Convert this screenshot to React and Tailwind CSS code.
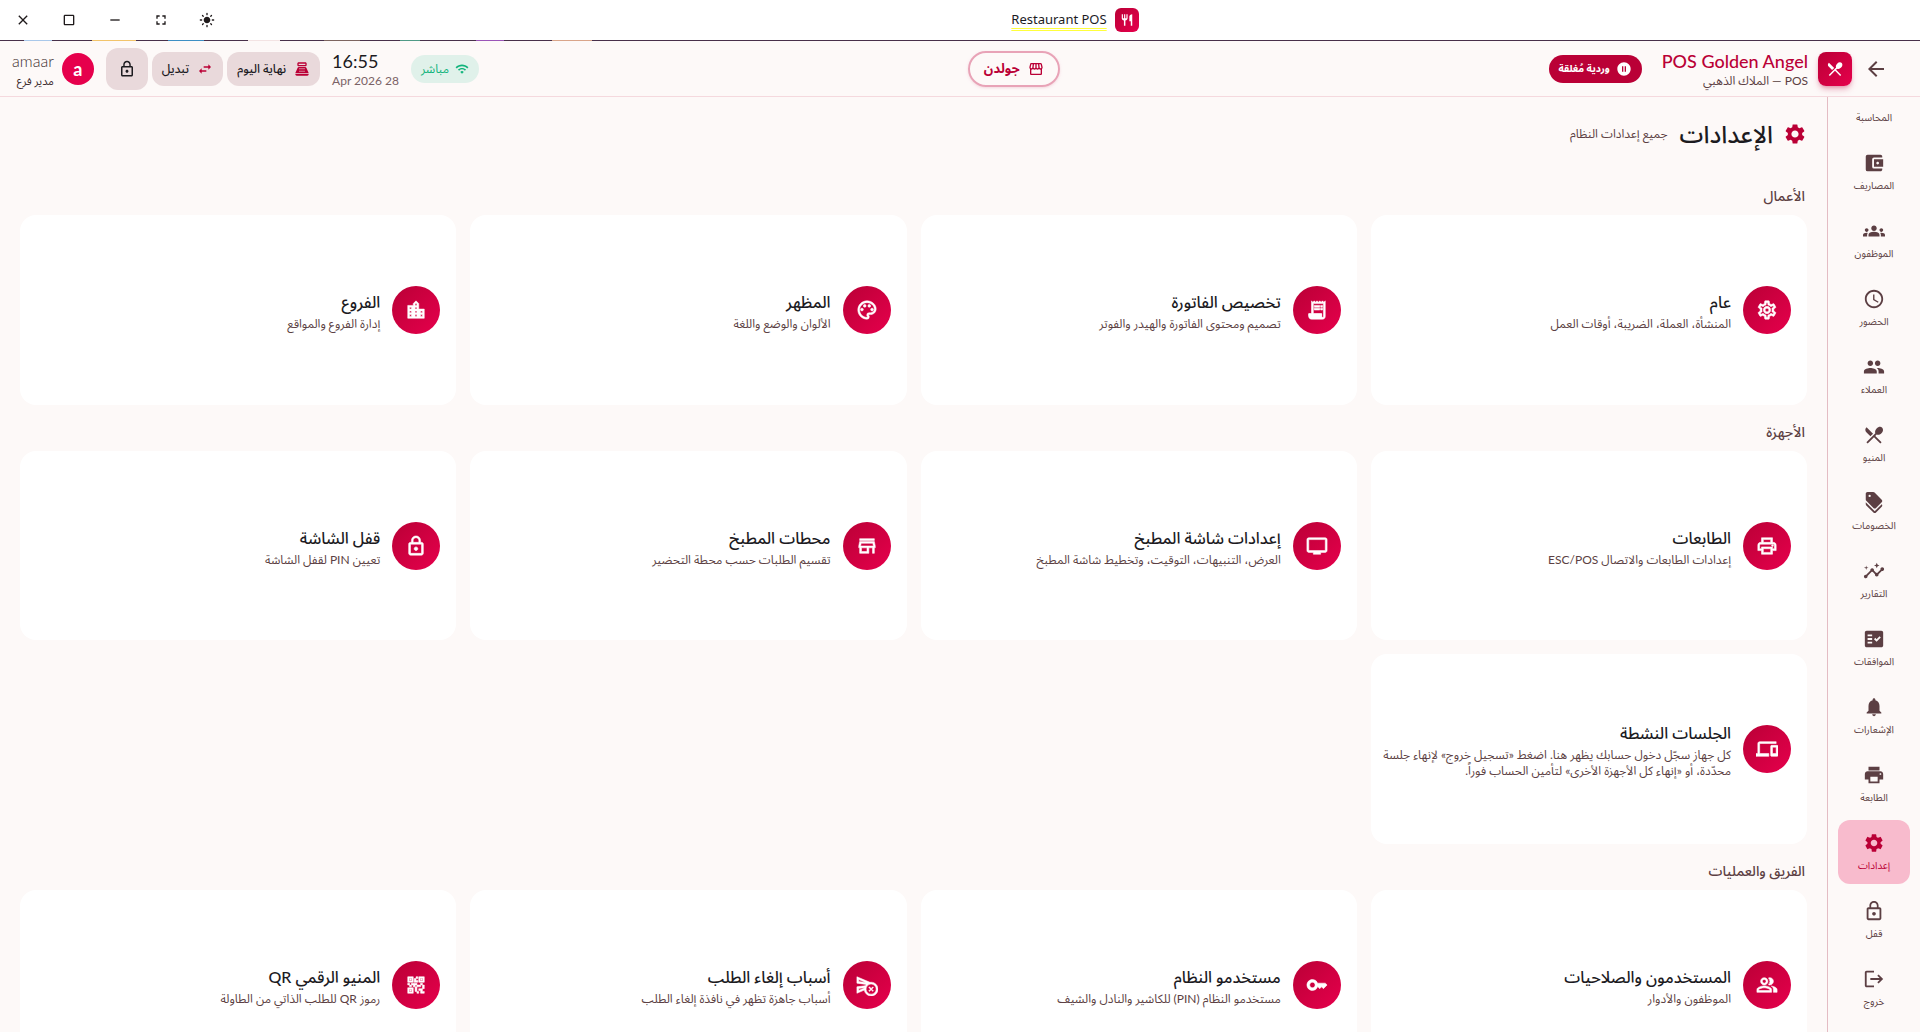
import React, { useState } from 'react';
import {
    MdAccountBalance,
    MdAccountBalanceWallet,
    MdGroups,
    MdAccessTime,
    MdPeople,
    MdRestaurantMenu,
    MdDiscount,
    MdInsights,
    MdFactCheck,
    MdNotifications,
    MdPrint,
    MdSettings,
    MdLockOutline,
    MdLogout,
    MdOutlineSettings,
    MdOutlinePalette,
    MdLocationCity,
    MdOutlinePrint,
    MdOutlineTv,
    MdOutlineStore,
    MdOutlineDevices,
    MdOutlinePeopleAlt,
    MdKey,
    MdOutlineCancelScheduleSend,
    MdQrCode2,
    MdArrowBack,
    MdOutlineStorefront,
    MdWifi,
    MdPointOfSale,
    MdSwapHoriz,
    MdClose,
    MdCropSquare,
    MdRemove,
    MdFullscreen,
    MdLightMode,
    MdRestaurant,
    MdPauseCircleFilled,
} from 'react-icons/md';

function ReceiptIcon({ size, className }) {
    return (
        <svg width={size} height={size} viewBox="0 0 24 24" fill="currentColor" stroke="currentColor" strokeWidth="0" className={className}>
            <path d="M19.5 3.5L18 2l-1.500 1.500L15 2l-1.500 1.500L12 2l-1.500 1.500L9 2 7.500 3.500 6 2v14H3v3c0 1.660 1.340 3 3 3h12c1.660 0 3-1.340 3-3V2l-1.500 1.500zM19 19c0 .550-.450 1-1 1s-1-.450-1-1v-3H8V5h11v14z" />
            <path d="M3 16h14v3l1 2H6a3 3 0 0 1-3-3z" />
            <path d="M9 7h6v2H9zM16 7h2v2h-2zM9 10h6v2H9zM16 10h2v2h-2z" />
        </svg>
    );
}

const navItems = [
    { id: 'accounting', label: 'المحاسبة', icon: MdAccountBalance },
    { id: 'expenses', label: 'المصاريف', icon: MdAccountBalanceWallet },
    { id: 'staff', label: 'الموظفون', icon: MdGroups },
    { id: 'attendance', label: 'الحضور', icon: MdAccessTime },
    { id: 'customers', label: 'العملاء', icon: MdPeople },
    { id: 'menu', label: 'المنيو', icon: MdRestaurantMenu },
    { id: 'discounts', label: 'الخصومات', icon: MdDiscount },
    { id: 'reports', label: 'التقارير', icon: MdInsights },
    { id: 'approvals', label: 'الموافقات', icon: MdFactCheck },
    { id: 'notifications', label: 'الإشعارات', icon: MdNotifications },
    { id: 'printer', label: 'الطابعة', icon: MdPrint },
    { id: 'settings', label: 'إعدادات', icon: MdSettings },
    { id: 'lock', label: 'قفل', icon: MdLockOutline },
    { id: 'logout', label: 'خروج', icon: MdLogout },
];

const sections = [
    {
        title: 'الأعمال',
        cards: [
            { title: 'عام', text: 'المنشأة، العملة، الضريبة، أوقات العمل', icon: MdOutlineSettings },
            { title: 'تخصيص الفاتورة', text: 'تصميم ومحتوى الفاتورة والهيدر والفوتر', icon: ReceiptIcon },
            { title: 'المظهر', text: 'الألوان والوضع واللغة', icon: MdOutlinePalette },
            { title: 'الفروع', text: 'إدارة الفروع والمواقع', icon: MdLocationCity },
        ],
    },
    {
        title: 'الأجهزة',
        cards: [
            { title: 'الطابعات', text: 'إعدادات الطابعات والاتصال ESC/POS', icon: MdOutlinePrint },
            { title: 'إعدادات شاشة المطبخ', text: 'العرض، التنبيهات، التوقيت، وتخطيط شاشة المطبخ', icon: MdOutlineTv },
            { title: 'محطات المطبخ', text: 'تقسيم الطلبات حسب محطة التحضير', icon: MdOutlineStore },
            { title: 'قفل الشاشة', text: 'تعيين PIN لقفل الشاشة', icon: MdLockOutline },
            {
                title: 'الجلسات النشطة',
                text: 'كل جهاز سجّل دخول حسابك يظهر هنا. اضغط «تسجيل خروج» لإنهاء جلسة محدّدة، أو «إنهاء كل الأجهزة الأخرى» لتأمين الحساب فوراً.',
                icon: MdOutlineDevices,
            },
        ],
    },
    {
        title: 'الفريق والعمليات',
        cards: [
            { title: 'المستخدمون والصلاحيات', text: 'الموظفون والأدوار', icon: MdOutlinePeopleAlt },
            { title: 'مستخدمو النظام', text: 'مستخدمو النظام (PIN) للكاشير والنادل والشيف', icon: MdKey },
            { title: 'أسباب إلغاء الطلب', text: 'أسباب جاهزة تظهر في نافذة إلغاء الطلب', icon: MdOutlineCancelScheduleSend },
            { title: 'المنيو الرقمي QR', text: 'رموز QR للطلب الذاتي من الطاولة', icon: MdQrCode2 },
        ],
    },
];

const windowControls = [
    { label: 'Theme', icon: MdLightMode },
    { label: 'Fullscreen', icon: MdFullscreen },
    { label: 'Minimize', icon: MdRemove },
    { label: 'Maximize', icon: MdCropSquare },
    { label: 'Close', icon: MdClose },
];

// Slice of the desktop that shows between the title bar and the app
function DesktopEdge() {
    return (
        <div className="flex h-px shrink-0 bg-[#48304a]" dir="ltr">
            <span className="ml-6 w-7 bg-[#a9c8ea]" />
            <span className="ml-10 w-11 bg-[#f2c46b]" />
            <span className="ml-8 w-9 bg-[#3d8fc4]" />
            <span className="ml-11 w-8 bg-[#f3e3e3]" />
            <span className="ml-11 w-9 bg-[#7d6560]" />
            <span className="ml-10 w-5 bg-[#4f9a86]" />
            <span className="ml-14 w-7 bg-[#9a55b8]" />
            <span className="ml-12 w-10 bg-[#d9a58a]" />
        </div>
    );
}

function TitleBar() {
    return (
        <div className="flex h-10 shrink-0 items-center bg-white">
            <div className="flex flex-1 items-center justify-center gap-2">
                <span className="flex h-6 w-6 items-center justify-center rounded-md bg-linear-to-br from-[#ba0036] to-[#e6004c] text-white">
                    <MdRestaurant size={14} />
                </span>
                <span className="font-['Noto_Sans'] text-[13px] text-[#1c1b1f] underline decoration-[#ffff3c] decoration-double decoration-1 underline-offset-4">
                    Restaurant POS
                </span>
            </div>
            <div className="flex">
                {windowControls.map((control) => (
                    <button
                        key={control.label}
                        type="button"
                        aria-label={control.label}
                        className="flex h-10 w-[46px] items-center justify-center text-[#1f1a1b]"
                    >
                        <control.icon size={16} />
                    </button>
                ))}
            </div>
        </div>
    );
}

function Header() {
    return (
        <header className="flex h-14 shrink-0 items-center justify-between border-b border-[#f5d9de] pr-8 pl-3">
            <div className="flex items-center">
                <button type="button" aria-label="رجوع" className="text-[#5c3f43]">
                    <MdArrowBack size={24} />
                </button>
                <span className="mr-3 flex h-[34px] w-[34px] items-center justify-center rounded-lg bg-linear-to-br from-[#ba0036] to-[#e6004c] text-white shadow-md shadow-[#ba0036]/30">
                    <MdRestaurantMenu size={18} />
                </span>
                <div className="mr-2.5 text-right">
                    <div className="text-lg leading-6 font-medium text-[#ba0036]" dir="ltr">POS Golden Angel</div>
                    <div className="text-xs leading-4 text-[#5c3f43]">POS — الملاك الذهبي</div>
                </div>
                <span className="mr-5 flex h-7 items-center gap-1.5 rounded-full bg-[#ba0036] px-2.5 text-[10px] font-bold text-white">
                    <MdPauseCircleFilled size={16} />
                    وردية مُغلقة
                </span>
            </div>

            <button
                type="button"
                className="flex h-9 items-center gap-2 rounded-full border-2 border-[#e8a3b7] px-3.5 text-[13px] font-bold text-[#ba0036] shadow-sm shadow-[#ba0036]/10"
            >
                <MdOutlineStorefront size={16} />
                جولدن
            </button>

            <div className="flex items-center">
                <span className="flex h-7 items-center gap-1.5 rounded-full bg-[#e0f1ea] px-2.5 text-xs text-[#12b47c]">
                    <MdWifi size={14} />
                    مباشر
                </span>
                <div className="mr-3 text-left" dir="ltr">
                    <div className="text-lg leading-6 text-[#1c1b1f]">16:55</div>
                    <div className="text-xs leading-4 text-[#7b6266]">Apr 2026 28</div>
                </div>
                <button
                    type="button"
                    className="mr-3 flex h-[34px] items-center gap-2 rounded-xl bg-[#e9d9db] px-2.5 text-xs font-medium text-[#1c1b1f]"
                >
                    <MdPointOfSale size={16} className="text-[#ba0036]" />
                    نهاية اليوم
                </button>
                <button
                    type="button"
                    className="mr-1 flex h-[34px] items-center gap-2 rounded-xl bg-[#e9d9db] px-2.5 text-xs font-medium text-[#1c1b1f]"
                >
                    <MdSwapHoriz size={16} className="text-[#ba0036]" />
                    تبديل
                </button>
                <button
                    type="button"
                    aria-label="قفل"
                    className="mr-1 flex h-[42px] w-[42px] items-center justify-center rounded-xl bg-[#e9d9db] text-[#1c1b1f]"
                >
                    <MdLockOutline size={18} />
                </button>
                <span className="mr-3 flex h-8 w-8 items-center justify-center rounded-full bg-[#e6004c] text-lg font-bold text-white">
                    a
                </span>
                <div className="mr-2 text-right">
                    <div className="text-base leading-6 font-light text-[#3c2c2e]">amaar</div>
                    <div className="text-[11px] leading-4 text-[#3c2c2e]">مدير فرع</div>
                </div>
            </div>
        </header>
    );
}

function SideNav({ active, onSelect }) {
    return (
        <nav className="flex w-[93px] shrink-0 flex-col border-l border-[#e4bcc4] py-3">
            <div className="flex min-h-0 flex-1 flex-col items-center justify-end gap-1 overflow-hidden">
                {navItems.map((item) => (
                    <button
                        key={item.id}
                        type="button"
                        onClick={() => onSelect(item.id)}
                        className={`flex h-16 w-[72px] shrink-0 flex-col items-center justify-center gap-[3px] rounded-xl text-[10px] leading-4
                            ${active === item.id ? 'bg-[#f8bbcd] text-[#ba0036]' : 'text-[#5c3f43]'}`}
                    >
                        <item.icon size={22} />
                        {item.label}
                    </button>
                ))}
            </div>
        </nav>
    );
}

function SettingCard({ card }) {
    return (
        <button type="button" className="flex aspect-[2.3] items-center gap-3 rounded-2xl bg-white pr-4 pl-1 text-right">
            <span className="flex h-12 w-12 shrink-0 items-center justify-center rounded-full bg-linear-to-br from-[#ba0036] to-[#e6004c] text-white">
                <card.icon size={22} className="stroke-[0.6] [&>path[fill=none]]:hidden" />
            </span>
            <span className="flex min-w-0 flex-col">
                <span className="text-base leading-7 font-medium text-[#1c1b1f]">{card.title}</span>
                <span className="text-xs leading-4 text-[#5c3f43]">{card.text}</span>
            </span>
        </button>
    );
}

function App() {
    const [active, setActive] = useState('settings');

    return (
        <div
            dir="rtl"
            className="flex h-screen flex-col overflow-hidden bg-[#fdf9f8] font-['Lato','Noto_Sans_Arabic','DejaVu_Sans',sans-serif]"
        >
            <TitleBar />
            <DesktopEdge />
            <Header />
            <div className="flex min-h-0 flex-1">
                <SideNav active={active} onSelect={setActive} />
                <main className="min-w-0 flex-1 overflow-hidden px-5 pt-4">
                    <div className="mb-3.5 flex h-[42px] items-center">
                        <MdSettings size={24} className="text-[#ba0036]" />
                        <h1 className="mr-2.5 text-2xl font-medium text-[#1c1b1f]">الإعدادات</h1>
                        <p className="mr-3 text-xs text-[#5c3f43]">جميع إعدادات النظام</p>
                    </div>
                    {sections.map((section) => (
                        <section key={section.title}>
                            <h2 className="px-0.5 pt-[15px] pb-[7px] text-sm leading-6 font-medium text-[#5c3f43]">{section.title}</h2>
                            <div className="grid grid-cols-4 gap-3.5">
                                {section.cards.map((card) => (
                                    <SettingCard key={card.title} card={card} />
                                ))}
                            </div>
                        </section>
                    ))}
                </main>
            </div>
        </div>
    );
}

export default App;
